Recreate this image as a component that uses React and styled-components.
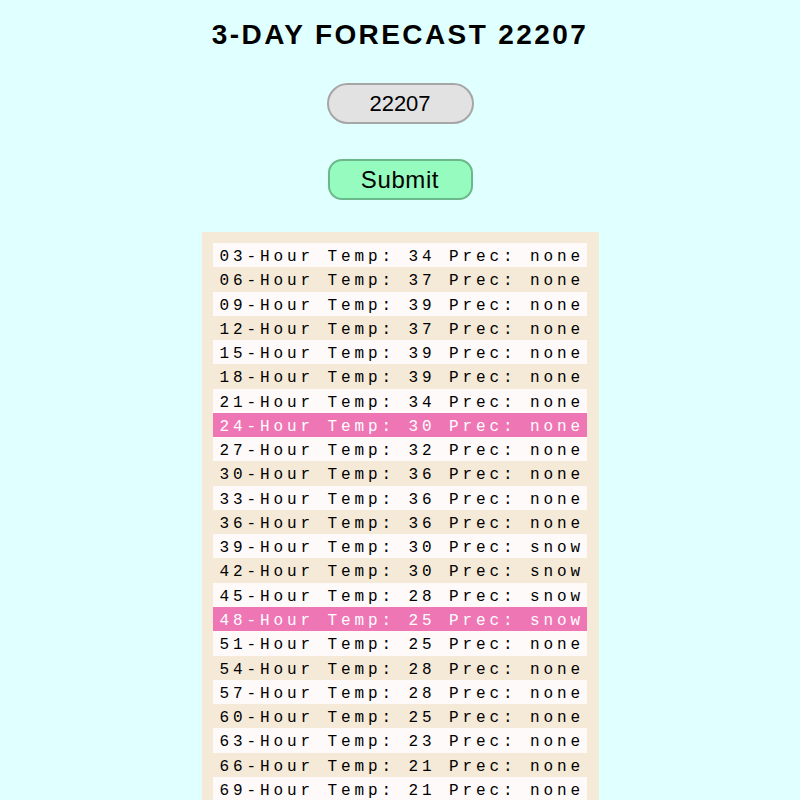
import React from "react";
import styled, { createGlobalStyle } from "styled-components";

const Global = createGlobalStyle`
  html, body { margin: 0; padding: 0; background: #e0ffff; }
  body { font-family: "Liberation Sans", Arial, sans-serif; }
`;

const Page = styled.main`
  display: flex;
  flex-direction: column;
  align-items: center;
  padding-top: 20px;
`;

const Title = styled.h1`
  margin: 0;
  font-family: "Liberation Sans", Arial, sans-serif;
  font-weight: 700;
  font-size: 28px;
  line-height: 30px;
  letter-spacing: 2.4px;
  text-transform: uppercase;
  color: #000;
`;

const Form = styled.form`
  display: flex;
  flex-direction: column;
  align-items: center;
  gap: 35px;
  margin-top: 33px;
`;

const ZipInput = styled.input`
  box-sizing: border-box;
  width: 147px;
  height: 41px;
  border: 2px solid #a6a6a6;
  border-radius: 21px;
  background: #e2e2e2;
  font-family: "Liberation Sans", Arial, sans-serif;
  font-size: 22px;
  text-align: center;
  color: #000;
  outline: none;
`;

const SubmitButton = styled.button`
  box-sizing: border-box;
  width: 145px;
  height: 41px;
  border: 2px solid #6bb98a;
  border-radius: 14px;
  background: #96fbbf;
  font-family: "Liberation Sans", Arial, sans-serif;
  font-size: 24px;
  color: #000;
  letter-spacing: 0.6px;
  cursor: pointer;
`;

const Panel = styled.section`
  box-sizing: border-box;
  width: 397px;
  margin-top: 32px;
  padding: 11px 12px 11px 11px;
  background: #f5e9d8;
  display: flex;
  flex-direction: column;
`;

const Row = styled.div`
  box-sizing: border-box;
  height: 24.27px;
  padding: 2px 0 0 7px;
  line-height: 24px;
  font-family: "Liberation Mono", "Courier New", monospace;
  font-size: 16px;
  letter-spacing: 3.9px;
  white-space: pre;
  color: ${(p) => (p.$hot ? "#fff" : "#000")};
  background: ${(p) => (p.$hot ? "#ef76b5" : p.$odd ? "#fffafa" : "transparent")};
`;

const data = [
  [34, "none"], [37, "none"], [39, "none"], [37, "none"], [39, "none"], [39, "none"],
  [34, "none"], [30, "none"], [32, "none"], [36, "none"], [36, "none"], [36, "none"],
  [30, "snow"], [30, "snow"], [28, "snow"], [25, "snow"], [25, "none"], [28, "none"],
  [28, "none"], [25, "none"], [23, "none"], [21, "none"], [21, "none"], [21, "none"],
];

export default function App() {
  return (
    <>
      <Global />
      <Page>
        <Title>3-Day Forecast 22207</Title>
        <Form onSubmit={(e) => e.preventDefault()}>
          <ZipInput defaultValue="22207" />
          <SubmitButton type="submit">Submit</SubmitButton>
        </Form>
        <Panel>
          {data.map(([t, p], i) => {
            const h = (i + 1) * 3;
            const hh = String(h).padStart(2, "0");
            return (
              <Row key={h} $odd={i % 2 === 0} $hot={h % 24 === 0}>
                {`${hh}-Hour Temp: ${t} Prec: ${p}`}
              </Row>
            );
          })}
        </Panel>
      </Page>
    </>
  );
}
